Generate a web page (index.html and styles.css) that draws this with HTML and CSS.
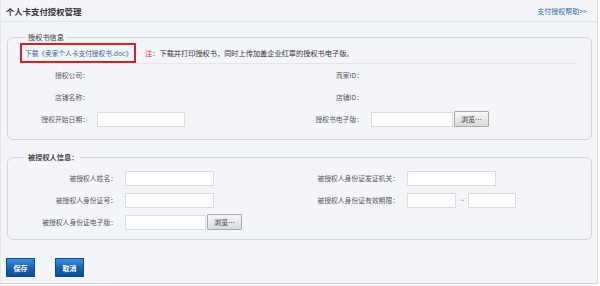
FILE: index.html
```html
<!DOCTYPE html>
<html lang="zh-CN">
<head>
<meta charset="utf-8">
<title>个人卡支付授权管理</title>
<link rel="stylesheet" href="styles.css">
</head>
<body>
<div class="page">
  <div class="header">
    <span class="title">个人卡支付授权管理</span>
    <a class="help" href="#">支付授权帮助&gt;&gt;</a>
  </div>

  <fieldset class="box box1">
    <legend class="legend">授权书信息</legend>
    <div class="notice">
      <a class="download" href="#">下载《卖家个人卡支付授权书.doc》</a>
      <span class="note"><span class="red">注：</span>下载并打印授权书，同时上传加盖企业红章的授权书电子版。</span>
    </div>
    <div class="grid grid1">
      <span class="label">授权公司：</span><span></span>
      <span class="label">商家ID：</span><span></span>
      <span class="label">店铺名称：</span><span></span>
      <span class="label">店铺ID：</span><span></span>
      <span class="label">授权开始日期：</span>
      <span class="field"><input class="input w88" type="text"></span>
      <span class="label">授权书电子版：</span>
      <span class="field"><input class="input w82" type="text"><button class="browse">浏览…</button></span>
    </div>
  </fieldset>

  <fieldset class="box box2">
    <legend class="legend bold">被授权人信息：</legend>
    <div class="grid grid2">
      <span class="label">被授权人姓名：</span>
      <span class="field"><input class="input w89" type="text"></span>
      <span class="label">被授权人身份证发证机关：</span>
      <span class="field"><input class="input w89" type="text"></span>
      <span class="label">被授权人身份证号：</span>
      <span class="field"><input class="input w89" type="text"></span>
      <span class="label">被授权人身份证有效期限：</span>
      <span class="field"><input class="input w49" type="text"><span class="tilde">~</span><input class="input w48" type="text"></span>
      <span class="label">被授权人身份证电子版：</span>
      <span class="field"><input class="input w81" type="text"><button class="browse">浏览…</button></span>
    </div>
  </fieldset>

  <div class="actions">
    <button class="btn">保存</button>
    <button class="btn">取消</button>
  </div>
</div>
</body>
</html>
```

FILE: styles.css
```css
* { box-sizing: border-box; }
html, body { margin: 0; padding: 0; background: #ffffff; }
body {
  font-family: "Noto Sans CJK SC", "Noto Sans", sans-serif;
  font-size: 7px;
  color: #555;
}
.page {
  width: 598px;
  height: 284px;
  background: #f4f5f9;
  border-right: 1px solid #d6d9df;
  border-bottom: 1px solid #d6d9df;
  border-left: 1px solid #e6e8ec;
}
.header {
  height: 22px;
  border-bottom: 1px solid #e1e4ea;
  display: flex;
  align-items: center;
  justify-content: space-between;
  padding: 1px 10px 0 5px;
}
.title {
  font-size: 8.4px;
  font-weight: bold;
  color: #333;
}
.help {
  font-size: 7px;
  color: #2f67a8;
  text-decoration: none;
}
.box {
  margin: 10px 0 0 6px;
  width: 585px;
  border: 1px solid #d3d6dc;
  border-radius: 6px;
  padding: 0 0 9px 0;
  min-width: 0;
}
.box2 { margin-top: 12px; padding: 5px 0 6px 0; }
.legend {
  margin-left: 18px;
  padding: 0 2px;
  line-height: 10px;
  font-size: 7.2px;
  color: #333;
}
.legend.bold { font-weight: bold; color: #444; }
.notice {
  margin: 1px 15px 0 12px;
  height: 21px;
  border-bottom: 1px solid #e4e6ea;
  display: flex;
  align-items: flex-start;
}
.download {
  display: flex;
  align-items: center;
  height: 20px;
  padding: 0 2px 0 3px;
  border: 2px solid #d4232a;
  color: #2c66ad;
  text-decoration: none;
  font-size: 6.7px;
  white-space: nowrap;
}
.note {
  margin-left: 9px;
  line-height: 20px;
  font-size: 7.2px;
  color: #333;
  white-space: nowrap;
}
.red { color: #e0292e; }
.grid {
  display: grid;
  column-gap: 8px;
  grid-auto-rows: 22px;
  align-items: center;
}
.grid1 { grid-template-columns: 81px 192px 66px 1fr; }
.grid2 { grid-template-columns: 109px 171px 95px 1fr; }
.label {
  text-align: right;
  white-space: nowrap;
  font-size: 6.8px;
  color: #555;
}
.field {
  display: flex;
  align-items: center;
}
.input {
  height: 15px;
  border: 1px solid #dcdcdc;
  background: #fff;
  padding: 0;
  margin: 0;
  outline: none;
}
.w88 { width: 88px; }
.w89 { width: 89px; }
.w82 { width: 82px; }
.w81 { width: 81px; }
.w49 { width: 49px; }
.w48 { width: 48px; }
.tilde {
  width: 12px;
  text-align: center;
  color: #888;
  font-size: 7px;
}
.browse {
  height: 16px;
  width: 35px;
  margin-left: 1px;
  padding: 0;
  border: 1px solid #a9a9a9;
  border-radius: 1px;
  background: linear-gradient(#f7f7f7, #d9d9d9);
  font-family: "Noto Sans CJK SC", sans-serif;
  font-size: 7px;
  color: #333;
}
.actions {
  display: flex;
  gap: 20px;
  margin: 18px 0 0 5px;
}
.btn {
  width: 29px;
  height: 19px;
  padding: 0;
  border: 1px solid #0d4f92;
  background: linear-gradient(#3d8fde, #1560b2 55%, #0c4f98);
  color: #fff;
  font-family: "Noto Sans CJK SC", sans-serif;
  font-size: 7px;
  font-weight: bold;
}
```
